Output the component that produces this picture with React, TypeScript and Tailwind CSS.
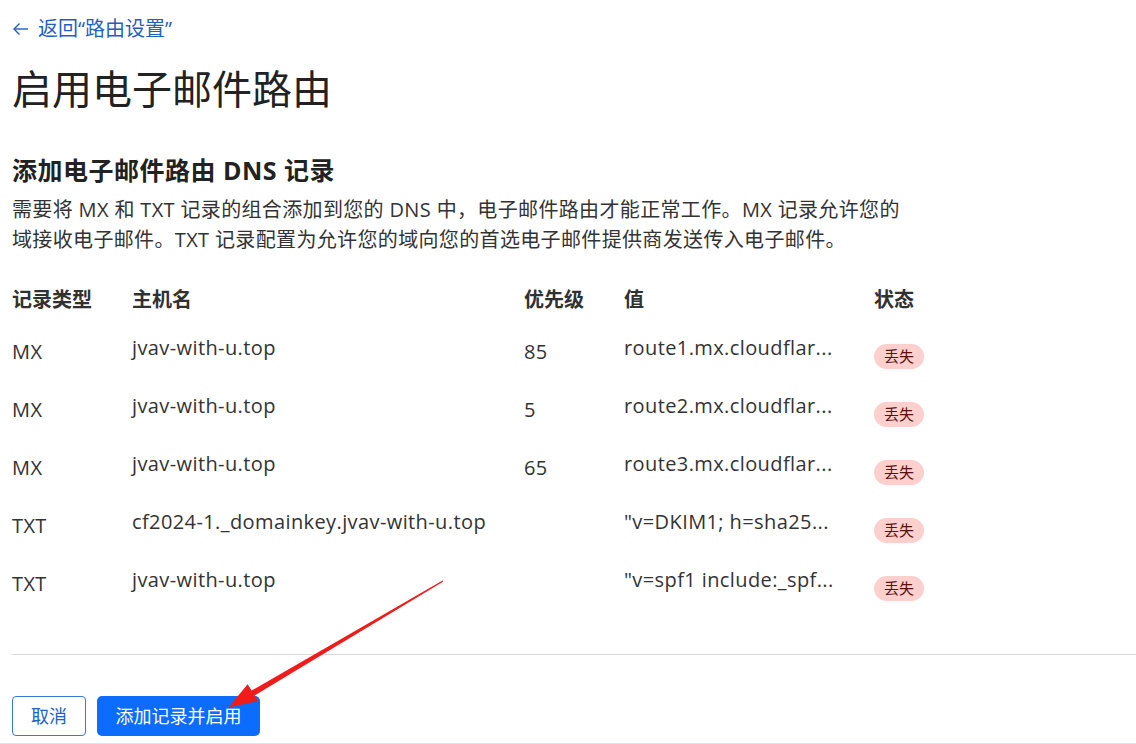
import React from "react";

const records = [
  { type: "MX", host: "jvav-with-u.top", priority: "85", value: "route1.mx.cloudflar..." },
  { type: "MX", host: "jvav-with-u.top", priority: "5", value: "route2.mx.cloudflar..." },
  { type: "MX", host: "jvav-with-u.top", priority: "65", value: "route3.mx.cloudflar..." },
  { type: "TXT", host: "cf2024-1._domainkey.jvav-with-u.top", priority: "", value: "\"v=DKIM1; h=sha25..." },
  { type: "TXT", host: "jvav-with-u.top", priority: "", value: "\"v=spf1 include:_spf..." },
];

const font = { fontFamily: '"Open Sans", "Noto Sans CJK SC", sans-serif' };

// grid columns: type / host / priority / value / status
const cols = "grid grid-cols-[120px_392px_100px_250px_1fr]";

export default function App() {
  return (
    <div className="relative w-[1136px] h-[744px] overflow-hidden bg-white text-[#333]" style={font}>
      <div className="pl-[12px]">
        {/* Back link */}
        <a className="mt-[15px] flex items-center gap-[9px] text-[20px] leading-[28px] text-[#1f5fc2]">
          <svg width="17" height="14" viewBox="0 0 17 14" fill="none" stroke="currentColor" strokeWidth="1.4">
            <path d="M16 7H2" />
            <path d="M7.5 1.5L2 7l5.5 5.5" />
          </svg>
          <span>返回“路由设置”</span>
        </a>

        <h1 className="mt-[20px] text-[40px] leading-[52px] text-[#222]">启用电子邮件路由</h1>

        <h2 className="mt-[38px] text-[25px] leading-[34px] font-bold tracking-[0.5px] text-[#222]">
          添加电子邮件路由 DNS 记录
        </h2>
        <p className="mt-[8px] text-[20px] leading-[30px] tracking-[0.35px]">
          <span className="block">需要将 MX 和 TXT 记录的组合添加到您的 DNS 中，电子邮件路由才能正常工作。MX 记录允许您的</span>
          <span className="block">域接收电子邮件。TXT 记录配置为允许您的域向您的首选电子邮件提供商发送传入电子邮件。</span>
        </p>

        {/* Records table */}
        <div className="mt-[31px] text-[20px]">
          <div className={`${cols} h-[28px] items-center leading-[28px] font-bold text-[#313131]`}>
            <div>记录类型</div>
            <div>主机名</div>
            <div>优先级</div>
            <div>值</div>
            <div>状态</div>
          </div>
          <div className="mt-[9px] tracking-[0.4px]">
            {records.map((r, i) => (
              <div key={i} className={`${cols} h-[58px] items-center leading-[28px]`}>
                <div>{r.type}</div>
                <div className="pb-[8px] whitespace-nowrap">{r.host}</div>
                <div>{r.priority}</div>
                <div className="pb-[8px] whitespace-nowrap">{r.value}</div>
                <div className="pt-[6px] tracking-normal">
                  <span className="inline-flex h-[25px] items-center rounded-full bg-[#fdcfcd] px-[10px] text-[15px] leading-none text-[#5c1111]">
                    丢失
                  </span>
                </div>
              </div>
            ))}
          </div>
        </div>

        <div className="mt-[41px] h-px bg-[#d9d9d9]" />

        {/* Actions */}
        <div className="mt-[41px] flex gap-[11px]">
          <button className="h-[40px] w-[74px] rounded-[4px] border border-[#3a78d6] text-[18px] text-[#2262c6]">
            取消
          </button>
          <button className="h-[40px] w-[163px] rounded-[5px] bg-[#0b6cff] text-[18px] text-white">
            添加记录并启用
          </button>
        </div>
      </div>
      <div className="mt-[7px] h-px bg-[#dfe3e6]" />

      {/* Red annotation arrow */}
      <svg className="pointer-events-none absolute inset-0" width="1136" height="744" viewBox="0 0 1136 744">
        <polygon
          fill="#f01c1c"
          points="442.6,580.5 251.6,690.6 247.6,684.2 228.5,707.5 258.2,701.0 254.6,695.4 443.4,581.5"
        />
      </svg>
    </div>
  );
}
